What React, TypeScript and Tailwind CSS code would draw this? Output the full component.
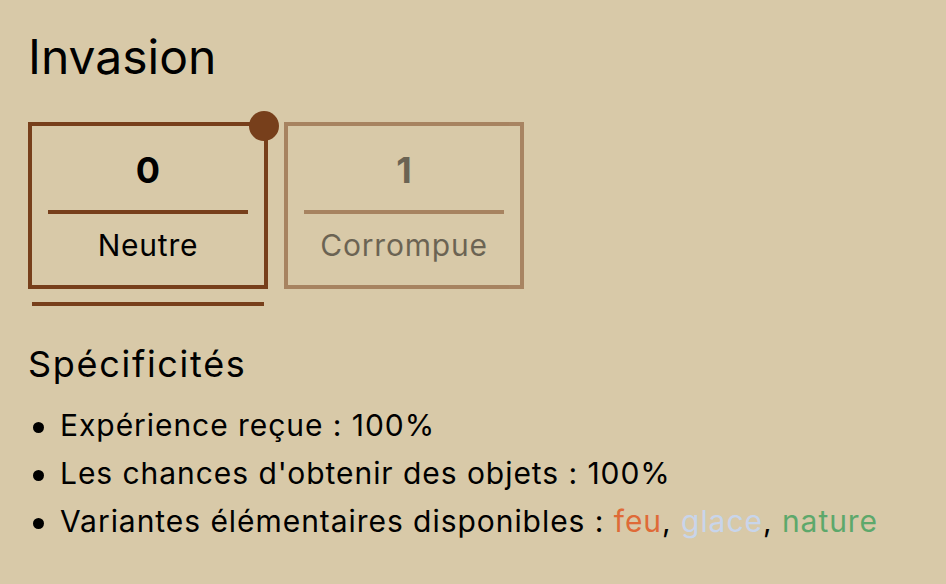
import React from "react";

function Card({ value, label, active }: { value: number; label: string; active?: boolean }) {
  return (
    <div className={active ? "flex flex-col" : "flex flex-col opacity-50"}>
      <div className="relative w-[240px] border-[4px] border-[#773f1b] px-4 py-[22px] flex flex-col items-stretch">
        {active && (
          <span className="absolute -top-[15px] -right-[15px] w-[30px] h-[30px] rounded-full bg-[#773f1b]" />
        )}
        <div className="text-center text-[36px] leading-[44px] font-bold text-black">{value}</div>
        <div className="mt-[18px] h-[4px] bg-[#773f1b]" />
        <div className="mt-[13px] text-center text-[30px] leading-[36px] tracking-[0.8px] text-black">{label}</div>
      </div>
      {active && <div className="mt-[13px] mx-[4px] h-[4px] bg-[#773f1b]" />}
    </div>
  );
}

function Item({ children }: { children: React.ReactNode }) {
  return (
    <li className="flex items-start">
      <span className="mt-[21px] ml-[5px] mr-[16px] w-[11px] h-[11px] rounded-full bg-black shrink-0" />
      <span className="text-[30px] leading-[48px] tracking-[0.95px] text-black">{children}</span>
    </li>
  );
}

export default function App() {
  return (
    <div
      className="w-[946px] h-[584px] bg-[#d8c9a8] pl-7 pt-[29px] text-black overflow-hidden"
      style={{ fontFamily: "Inter, 'Noto Sans', sans-serif" }}
    >
      <h1 className="text-[48px] leading-[56px] font-normal">Invasion</h1>
      <div className="mt-[37px] flex items-start gap-4">
        <Card value={0} label="Neutre" active />
        <Card value={1} label="Corrompue" />
      </div>
      <h2 className="mt-[36px] text-[36px] leading-[44px] tracking-[1.7px] font-normal">Spécificités</h2>
      <ul className="mt-[15px] flex flex-col">
        <Item>Expérience reçue : 100%</Item>
        <Item>Les chances d'obtenir des objets : 100%</Item>
        <Item>
          Variantes élémentaires disponibles : <span className="text-[#df6a37]">feu</span>,{" "}
          <span className="text-[#c8d5eb]">glace</span>, <span className="text-[#5da86b]">nature</span>
        </Item>
      </ul>
    </div>
  );
}
